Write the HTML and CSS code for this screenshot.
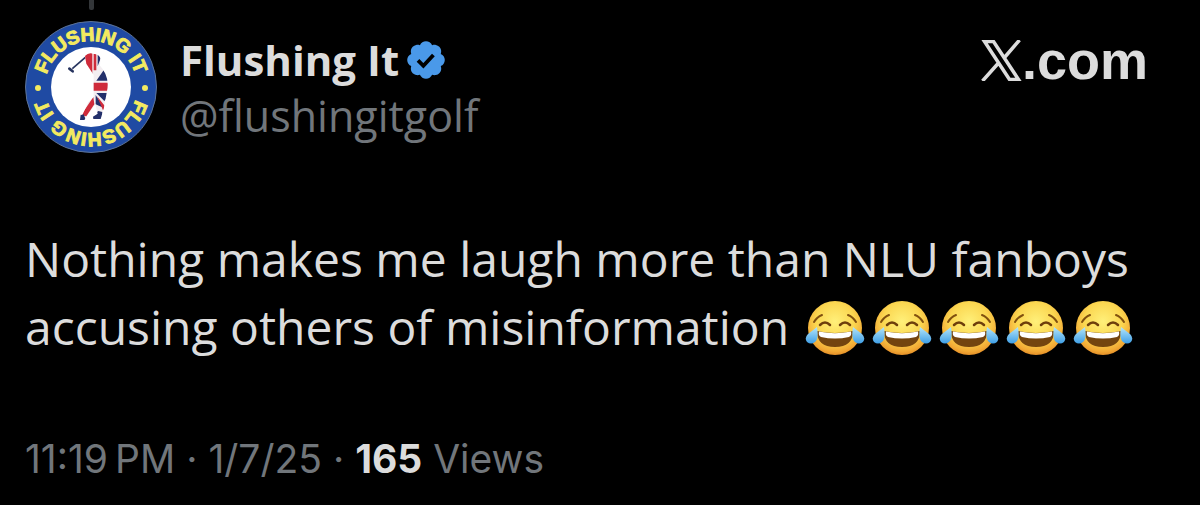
FILE: index.html
```html
<!DOCTYPE html>
<html lang="en">
<head>
<meta charset="utf-8">
<meta name="viewport" content="width=device-width, initial-scale=1">
<title>Flushing It on X</title>
<link rel="stylesheet" href="styles.css">
</head>
<body>
<svg class="defs" aria-hidden="true">
  <defs>
    <radialGradient id="face" cx=".5" cy=".38" r=".65">
      <stop offset="0" stop-color="#fff07a"/>
      <stop offset=".55" stop-color="#fbd650"/>
      <stop offset=".85" stop-color="#f2a935"/>
      <stop offset="1" stop-color="#df8422"/>
    </radialGradient>
    <linearGradient id="tear" x1="0" y1="0" x2="0" y2="1">
      <stop offset="0" stop-color="#b5e6fa"/>
      <stop offset="1" stop-color="#3f9fe6"/>
    </linearGradient>
    <symbol id="joy" viewBox="0 0 60 60">
      <circle cx="30" cy="30" r="27" fill="url(#face)"/>
      <path d="M9 24q3-5 8-7M51 24q-3-5-8-7" fill="none" stroke="#80500f" stroke-width="2" stroke-linecap="round"/>
      <path d="M15 27q5-5 10 0M35 27q5-5 10 0" fill="none" stroke="#6e3f0c" stroke-width="2.500" stroke-linecap="round"/>
      <path d="M12 33q18 4 36 0q0 16-18 16t-18-16z" fill="#73440f"/>
      <path d="M14 33.500q16 3.500 32 0q1 4-2 5.500q-14 3-28 0q-3-1.500-2-5.500z" fill="#fff"/>
      <path d="M12 29q2 12-2 15q-4 3-8 0q-3-4 1-8q4-3 9-7z" fill="url(#tear)"/>
      <path d="M48 29q-2 12 2 15q4 3 8 0q3-4-1-8q-4-3-9-7z" fill="url(#tear)"/>
    </symbol>
  </defs>
</svg>
<article class="post">
  <header class="head">
    <div class="thread">
      <svg class="avatar" viewBox="0 0 132 132" role="img" aria-label="Flushing It logo">
        <defs>
          <path id="ring-top" d="M20 66a46 46 0 0 1 92 0"/>
          <path id="ring-bottom" d="M112 66a46 46 0 0 1-92 0"/>
          <clipPath id="golfer">
            <path d="M72 27Q82 16 96 20Q116 22 118 34L117 56Q127 66 133 80Q144 104 138 132L128 186L119 216H97L96 209L110 200L103 172L82 202L70 219H57L59 203L64 204L82 165L98 150V84L76 50Z"/>
          </clipPath>
        </defs>
        <circle cx="66" cy="66" r="65.500" fill="#1f4aa3" stroke="#5d7396"/>
        <circle cx="66" cy="66" r="40" fill="#fff"/>
        <text class="ring"><textPath href="#ring-top" startOffset="50%">FLUSHING IT</textPath></text>
        <text class="ring"><textPath href="#ring-bottom" startOffset="50%">FLUSHING IT</textPath></text>
        <circle cx="13" cy="67" r="3" fill="#f3ea60"/>
        <circle cx="120" cy="67" r="3" fill="#f3ea60"/>
        <g transform="translate(36 26) scale(.3333)">
          <path d="M73 31L34 65" fill="none" stroke="#27345f" stroke-width="5"/>
          <path d="M25 65L35 73" fill="none" stroke="#27345f" stroke-width="8" stroke-linecap="round"/>
          <g clip-path="url(#golfer)">
            <path fill="#f3eef1" d="M50 10h100v220H50z"/>
            <path fill="#cf2b3b" d="M66 12H94V85L70 55Z"/>
            <path fill="#cf2b3b" d="M98 20h8v50h-8z"/>
            <path fill="#23306b" d="M110 18h15L110 58ZM106 101L128 70L150 101ZM106 138H150L130 162ZM104 144L130 184L104 172Z"/>
            <path fill="#cf2b3b" d="M90 107h60v24H90zM97 150L60 205L76 208L100 172ZM108 148L134 180L126 190Z"/>
            <path fill="#23306b" d="M50 202L68 202L75 220H50ZM92 208L112 192L124 195V220H92Z"/>
          </g>
        </g>
      </svg>
    </div>
    <div class="who">
      <div class="name-row">
        <a class="name" href="#">Flushing It</a>
        <svg class="badge" viewBox="0 0 22 22" role="img" aria-label="Verified"><path fill="#4a99e9" d="M20.396 11c-.018-.646-.215-1.275-.57-1.816-.354-.54-.852-.972-1.438-1.246.223-.607.27-1.264.14-1.897-.131-.634-.437-1.218-.882-1.687-.47-.445-1.053-.75-1.687-.882-.633-.13-1.29-.083-1.897.14-.273-.587-.704-1.086-1.245-1.440S11.647 1.620 11 1.604c-.646.017-1.273.213-1.813.568s-.969.854-1.240 1.440c-.608-.223-1.267-.272-1.902-.14-.635.130-1.220.436-1.690.882-.445.470-.749 1.055-.878 1.688-.130.633-.080 1.290.144 1.896-.587.274-1.087.705-1.443 1.245-.356.540-.555 1.170-.574 1.817.020.647.218 1.276.574 1.817.356.540.856.972 1.443 1.245-.224.606-.274 1.263-.144 1.896.130.634.433 1.218.877 1.688.470.443 1.054.747 1.687.878.633.132 1.290.084 1.897-.136.274.586.705 1.084 1.246 1.439.540.354 1.170.551 1.816.569.647-.016 1.276-.213 1.817-.567s.972-.854 1.245-1.440c.604.239 1.266.296 1.903.164.636-.132 1.220-.447 1.680-.907.460-.460.776-1.044.908-1.681s.075-1.299-.165-1.903c.586-.274 1.084-.705 1.439-1.246.354-.540.551-1.170.569-1.816z"/><path d="M7 11.200l2.700 2.700 5-5.400" fill="none" stroke="#000" stroke-width="1.900"/></svg>
      </div>
      <a class="handle" href="#">@flushingitgolf</a>
    </div>
    <a class="brand" href="#" aria-label="X.com">
      <svg class="x-logo" viewBox="0 0 40 41" aria-hidden="true"><path d="M3 1.500H12L37 39.500H28ZM38 0L23 17.500M1 41L17 23" fill="none" stroke="#dcdcdc" stroke-width="3.500"/></svg><span>.com</span>
    </a>
  </header>
  <p class="body">Nothing makes me laugh more than NLU fanboys accusing others of misinformation <span class="emojis" role="img" aria-label="Face with tears of joy, five times"><svg><use href="#joy"/></svg><svg><use href="#joy"/></svg><svg><use href="#joy"/></svg><svg><use href="#joy"/></svg><svg><use href="#joy"/></svg></span></p>
  <footer class="meta"><time datetime="2025-01-07T23:19">11:19&#8239;PM · 1/7/25</time> · <strong>165</strong> Views</footer>
</article>
</body>
</html>
```
FILE: styles.css
```css
body { margin: 0; background: #000; color: #dcdcdc; font-family: "Open Sans", sans-serif; }
a { color: inherit; text-decoration: none; }
.defs { position: absolute; width: 0; height: 0; }
.post { padding: 0 52px 20px 25px; }
.head { display: flex; align-items: flex-start; gap: 23px; }
.thread { display: grid; gap: 11px; justify-items: center; }
.thread::before { content: ""; width: 5px; height: 10px; background: #333639; border-radius: 0 0 2px 2px; }
.avatar { width: 132px; height: 132px; display: block; }
.ring { font: bold 19px "Liberation Sans", sans-serif; fill: #f3ea60; stroke: #f3ea60; stroke-width: 1px; text-anchor: middle; }
.who { flex: 1; padding-top: 32px; }
.name-row { display: flex; align-items: center; gap: 5px; line-height: 56px; }
.name { font-size: 42px; font-weight: 700; }
.badge { width: 44px; height: 44px; }
.handle { display: block; font-size: 43px; line-height: 56px; color: #71767b; }
.brand { display: flex; align-items: center; padding-top: 32px; font: bold 54px/56px "Liberation Sans", sans-serif; }
.x-logo { width: 41px; height: 41px; }
.body { margin: 72px 0 0; font-size: 48px; line-height: 68px; }
.emojis { display: inline-flex; gap: 7px; padding-left: 3px; vertical-align: -13px; }
.emojis svg { width: 60px; height: 60px; }
.meta { margin-top: 70px; font-family: Inter, sans-serif; font-size: 39px; line-height: 56px; color: #71767b; }
.meta strong { color: #dcdcdc; }
```
